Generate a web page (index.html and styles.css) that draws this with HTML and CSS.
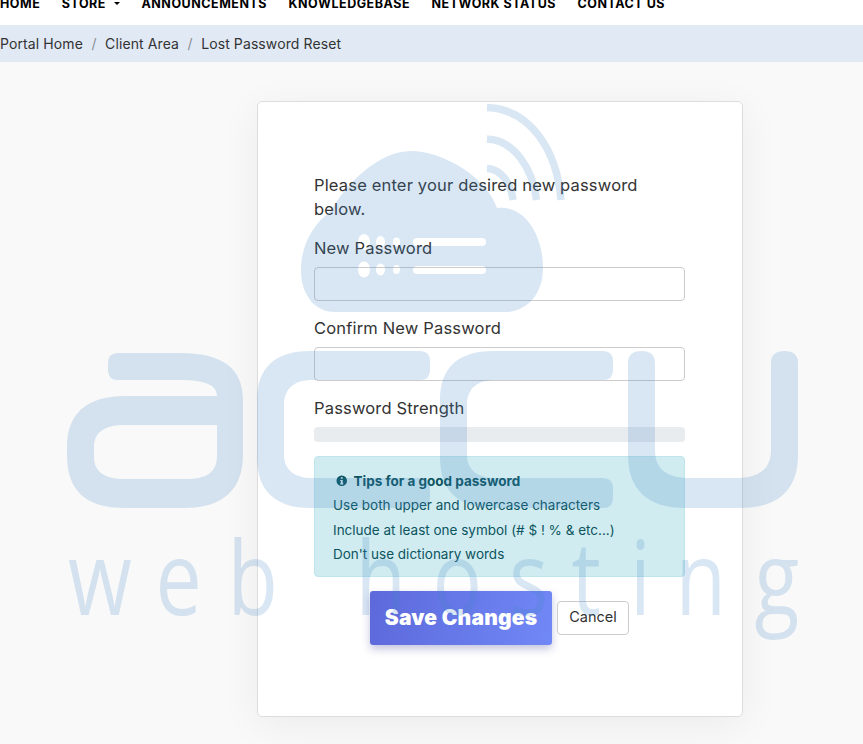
FILE: index.html
```html
<!DOCTYPE html>
<html lang="en">
<head>
<meta charset="utf-8">
<title>Lost Password Reset</title>
<link rel="stylesheet" href="styles.css">
</head>
<body>
<header class="topnav">
  <a class="nav-link" href="#">Home</a>
  <a class="nav-link nav-caret" href="#">Store</a>
  <a class="nav-link" href="#">Announcements</a>
  <a class="nav-link" href="#">Knowledgebase</a>
  <a class="nav-link" href="#">Network Status</a>
  <a class="nav-link" href="#">Contact Us</a>
</header>
<nav class="crumbs">
  <a href="#">Portal Home</a><span class="sep">/</span><a href="#">Client Area</a><span class="sep">/</span><span>Lost Password Reset</span>
</nav>
<main class="page">
  <form class="card">
    <p class="intro">Please enter your desired new password below.</p>
    <label class="field-label" for="pw1">New Password</label>
    <input class="field" id="pw1" type="password">
    <label class="field-label" for="pw2">Confirm New Password</label>
    <input class="field" id="pw2" type="password">
    <div class="field-label">Password Strength</div>
    <div class="strength"></div>
    <div class="tips">
      <div class="tips-title">
        <svg class="tips-icon" viewBox="0 0 12 12" aria-hidden="true"><path fill-rule="evenodd" d="M6 .5a5.500 5.500 0 1 1 0 11 5.500 5.500 0 0 1 0-11ZM5 2.300v1.700h2V2.300H5Zm-.6 2.900v1.100H5v2.400h-.6v1.100h3.200V8.700H7V5.200H4.400Z"/></svg>
        <strong>Tips for a good password</strong>
      </div>
      <div class="tip">Use both upper and lowercase characters</div>
      <div class="tip">Include at least one symbol (# $ ! % &amp; etc...)</div>
      <div class="tip">Don't use dictionary words</div>
    </div>
    <div class="actions">
      <button class="btn-save" type="button">Save Changes</button>
      <button class="btn-cancel" type="button">Cancel</button>
    </div>
  </form>
</main>
<svg class="watermark" viewBox="0 0 863 744" aria-hidden="true">
  <defs>
    <mask id="cloud-holes" maskUnits="userSpaceOnUse" x="0" y="0" width="863" height="744">
      <rect width="863" height="744" fill="#fff"/>
      <g fill="#000">
        <ellipse cx="364" cy="242" rx="6" ry="8"/>
        <ellipse cx="380.500" cy="242" rx="4.500" ry="6"/>
        <ellipse cx="396.500" cy="242" rx="3.500" ry="4.500"/>
        <rect x="413" y="238" width="73" height="8" rx="4"/>
        <ellipse cx="364" cy="269.500" rx="6" ry="8"/>
        <ellipse cx="380.500" cy="269.500" rx="4.500" ry="6"/>
        <ellipse cx="396.500" cy="269.500" rx="3.500" ry="4.500"/>
        <rect x="413" y="266" width="73" height="8" rx="4"/>
      </g>
    </mask>
  </defs>
  <path class="wm-fill" mask="url(#cloud-holes)" d="M335 312C314 312 301 294 301 270C301 245 313 224 331 211C345 185 378 151 411 151C444 151 487 178 497 208C525 205 543 235 543 268C543 294 527 312 505 312Z"/>
  <g class="wm-wave">
    <path d="M487 107.500C530 109 557 150 561 200"/>
    <path d="M487 139C515 140 533 170 536.500 200"/>
    <path d="M487 168.500C500 169 511 182 513 200"/>
  </g>
  <path class="wm-fill" fill-rule="evenodd" d="M118 353H180C222 353 243 368 243 400V455C243 490 222 508 185 508H125C85 508 67 490 67 455V447C67 415 85 396 125 396H217C217 385 205 380 180 380H118Q108 380 108 370V363Q108 353 118 353ZM125 425C105 425 94 432 94 447V457C94 472 105 479 125 479H185C208 479 217 472 217 455V425Z"/>
  <path class="wm-fill" d="M420 351Q430 351 430 361V370Q430 380 420 380H312C295 380 284 388 284 405V455C284 470 295 478 312 478H420Q430 478 430 488V498Q430 508 420 508H310C275 508 257 490 257 458V400C257 368 275 351 310 351Z"/>
  <path class="wm-fill" d="M603 351Q613 351 613 361V370Q613 380 603 380H495C478 380 467 388 467 405V455C467 470 478 478 495 478H603Q613 478 613 488V498Q613 508 603 508H493C458 508 440 490 440 458V400C440 368 458 351 493 351Z"/>
  <path class="wm-fill" d="M628 363Q628 351 641.500 351Q655 351 655 363V450C655 470 668 478 690 478H735C758 478 771 470 771 450V363Q771 351 784.500 351Q798 351 798 363V455C798 490 778 508 740 508H685C648 508 628 490 628 455Z"/>
  <text class="wm-text" y="615" x="85 194.400 284.400 400 444.400 540.600 636.300 714.400 787.500 844.400 943.100">web hosting</text>
</svg>
</body>
</html>
```

FILE: styles.css
```css
* { box-sizing: border-box; }
html, body { height: 100%; }
body {
  margin: 0;
  position: relative;
  height: 744px;
  overflow: hidden;
  background: #f9f9f9;
  color: #333;
  font-family: Inter, "Open Sans", sans-serif;
  font-size: 16.500px;
  line-height: 24px;
  letter-spacing: .17px;
}
a { color: inherit; text-decoration: none; }

.topnav {
  height: 25px;
  background: #fff;
  display: flex;
  align-items: flex-end;
  gap: 21.500px;
  padding-bottom: 13px;
  overflow: hidden;
}
.nav-link {
  font-size: 12.500px;
  line-height: 16px;
  font-weight: 700;
  text-transform: uppercase;
  color: #000;
  letter-spacing: .52px;
}
.nav-caret::after {
  content: "";
  display: inline-block;
  margin-left: 8px;
  vertical-align: 3px;
  border-top: 3px solid #000;
  border-left: 3px solid transparent;
  border-right: 3px solid transparent;
}

.crumbs {
  height: 37px;
  background: #e1e9f5;
  display: flex;
  align-items: center;
  font-size: 14px;
  letter-spacing: .1px;
  color: #333;
}
.sep { color: #8a8f95; padding: 0 8.500px; }

.page { padding: 39px 0 0 257px; }
.card {
  width: 486px;
  background: #fff;
  border: 1px solid #ddd;
  border-radius: 5px;
  padding: 71px 57px 71px 56px;
  box-shadow: 0 8px 40px rgba(0, 0, 0, .06);
}
.intro { margin: 0 0 15px; color: #333; }
.field-label { display: block; margin-bottom: 7px; color: #333; }
.field {
  display: block;
  width: 100%;
  height: 34px;
  margin-bottom: 15px;
  background: #fff;
  border: 1px solid #ccc;
  border-radius: 4px;
}
.strength {
  height: 15px;
  margin-bottom: 14px;
  background: #e9ecef;
  border-radius: 4px;
}
.tips {
  height: 121px;
  padding: 12px 18px 0;
  background: #d1ecf1;
  border: 1px solid #bee5eb;
  border-radius: 4px;
  color: #0c5460;
  font-size: 13.500px;
  letter-spacing: 0;
  line-height: 24.400px;
}
.tips-title { display: flex; align-items: center; padding-left: 3px; gap: 6px; }
.tips-title strong { font-weight: 700; }
.tips-icon { width: 11.500px; height: 11.500px; fill: #0c5460; }
.actions {
  display: flex;
  justify-content: center;
  align-items: center;
  gap: 5px;
  margin-top: 14px;
}
.btn-save {
  width: 182px;
  height: 54px;
  border: 0;
  border-radius: 3px;
  background: linear-gradient(100deg, #5d69db, #7088f5);
  box-shadow: 0 4px 8px rgba(60, 60, 150, .3);
  color: #fff;
  font: 900 21px/24px Inter, sans-serif;
  letter-spacing: .2px;
  padding: 0;
}
.btn-cancel {
  width: 72px;
  height: 34px;
  background: #fff;
  border: 1px solid #ccc;
  border-radius: 4px;
  color: #333;
  font: 400 14.500px/20px Inter, sans-serif;
  padding: 0 0 2px;
}

.watermark {
  position: absolute;
  left: 0;
  top: 0;
  width: 863px;
  height: 744px;
  pointer-events: none;
}
.wm-fill { fill: rgba(66, 133, 200, .2); }
.wm-wave { fill: none; stroke: rgba(66, 133, 200, .2); stroke-width: 7.500px; }
.wm-text {
  fill: rgba(66, 133, 200, .2);
  font-family: "Open Sans", sans-serif;
  font-weight: 400;
  font-size: 103px;
  letter-spacing: 0;
  transform: scale(.8, 1);
}
```
